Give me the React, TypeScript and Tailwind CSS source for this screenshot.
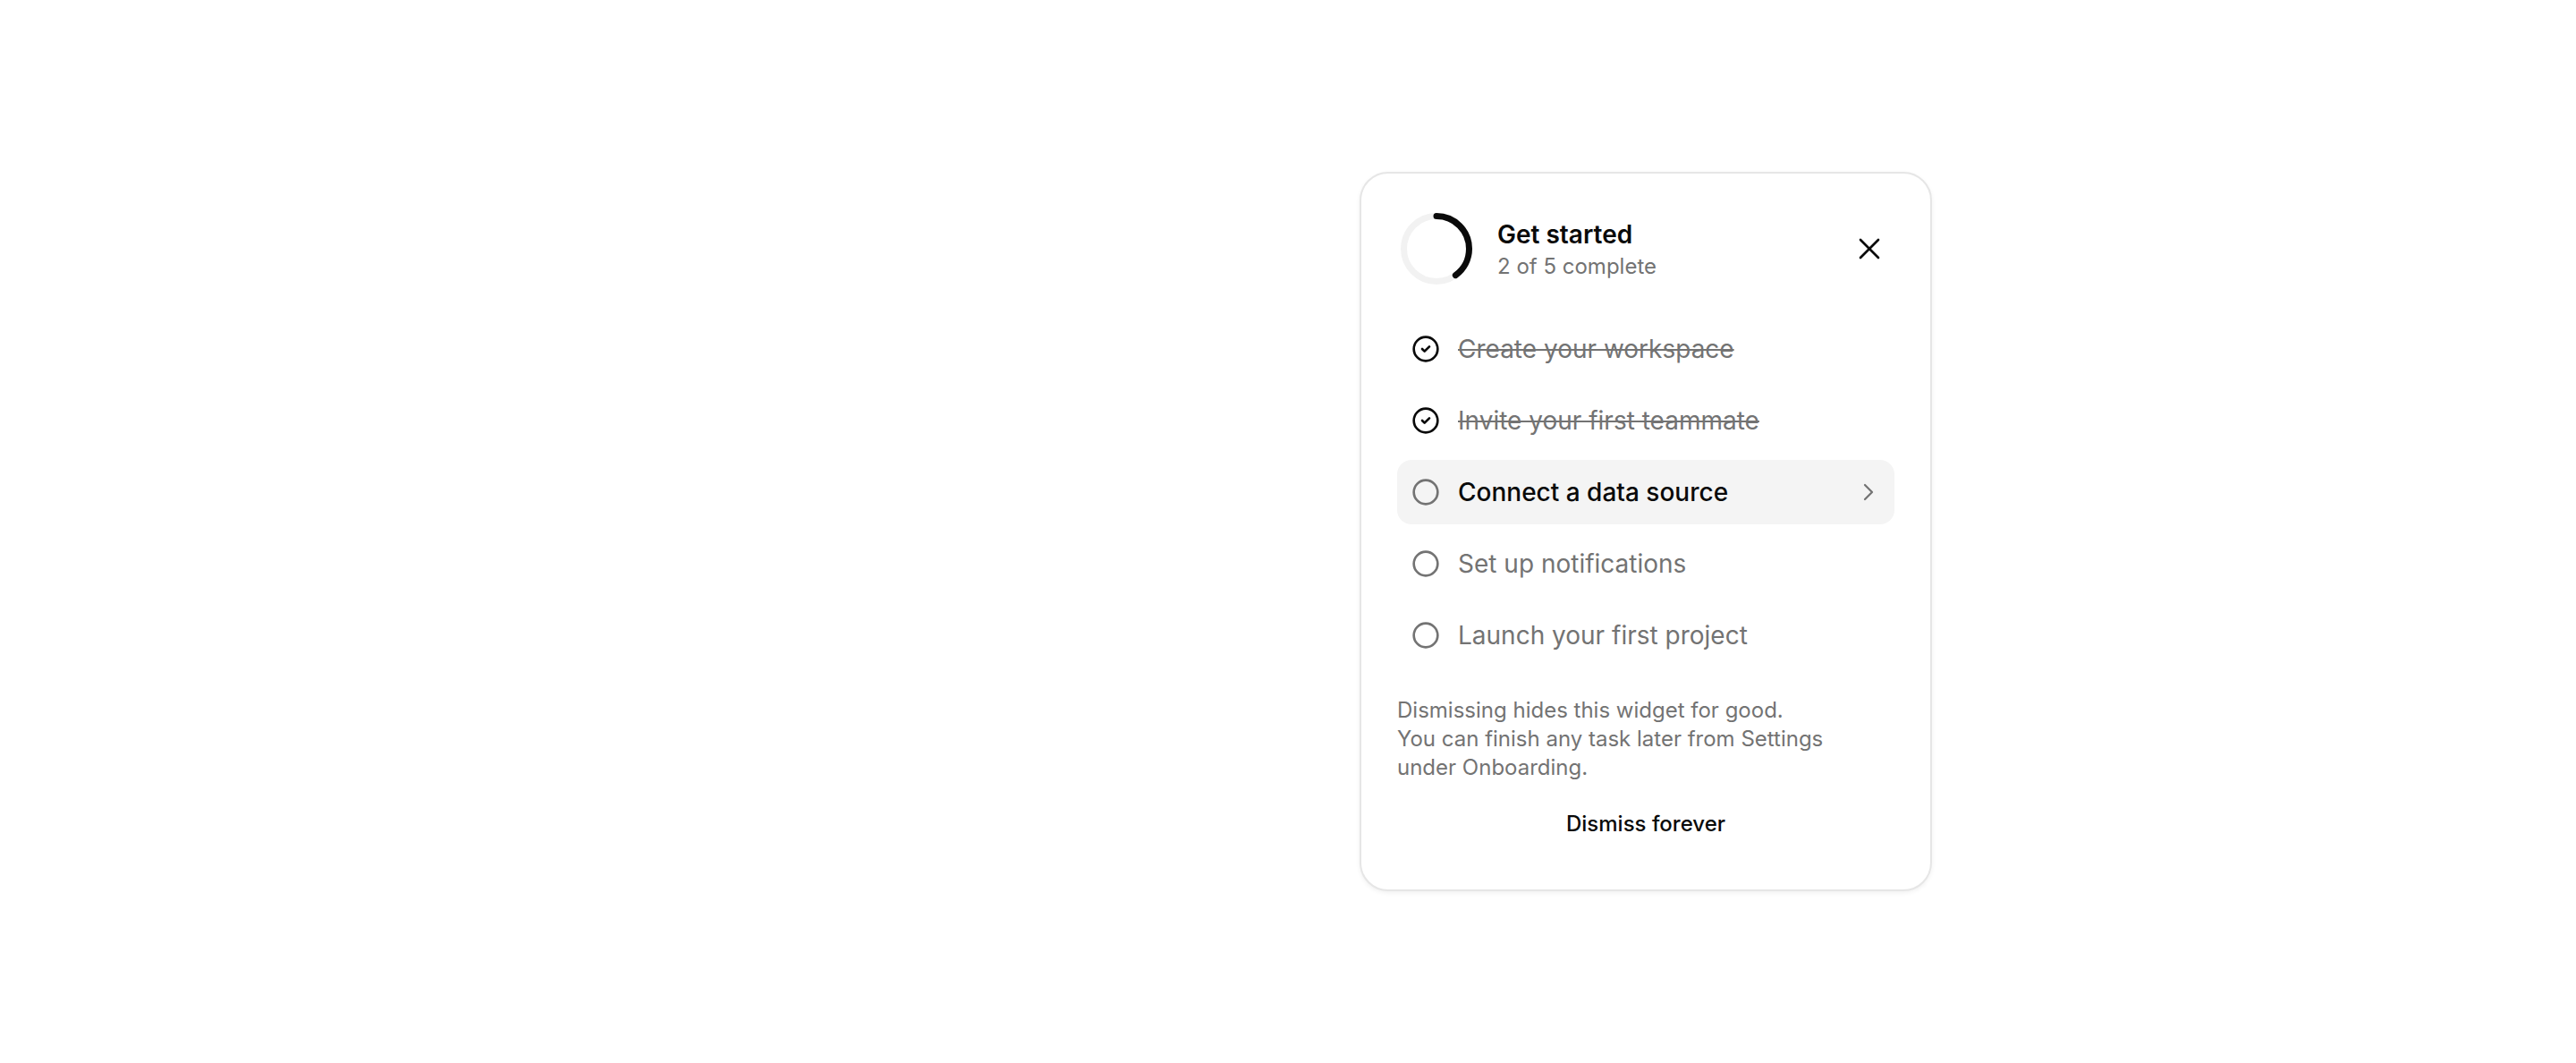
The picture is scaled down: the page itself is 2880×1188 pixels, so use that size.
import React from "react";
import { X, CircleCheck, Circle, ChevronRight } from "lucide-react";

type Task = { label: string; done: boolean; current?: boolean };

const tasks: Task[] = [
  { label: "Create your workspace", done: true },
  { label: "Invite your first teammate", done: true },
  { label: "Connect a data source", done: false, current: true },
  { label: "Set up notifications", done: false },
  { label: "Launch your first project", done: false },
];

function ProgressRing() {
  return (
    <svg width="88" height="88" viewBox="0 0 88 88" className="-rotate-90 shrink-0">
      <circle cx="44" cy="44" r="36.5" fill="none" stroke="#f2f2f2" strokeWidth="7" />
      <circle
        cx="44"
        cy="44"
        r="36.5"
        fill="none"
        stroke="#0a0a0a"
        strokeWidth="7"
        strokeLinecap="round"
        strokeDasharray="91.7 229.3"
      />
    </svg>
  );
}

export default function App() {
  return (
    <div
      className="min-h-screen w-full bg-white flex items-center"
      style={{ fontFamily: "Inter, 'Noto Sans', sans-serif" }}
    >
      <div className="w-full max-w-[1536px] mx-auto px-12 flex justify-end">
        <div className="w-[640px] rounded-[32px] border-2 border-[#e6e6e6] bg-white p-10 shadow-[0_2px_5px_rgba(0,0,0,0.06)]">
          <div className="flex items-center gap-6">
            <ProgressRing />
            <div className="flex-1 min-w-0 pt-1">
              <div className="text-[28px] leading-[36px] font-semibold text-neutral-950">Get started</div>
              <div className="text-[24px] leading-[36px] text-[#737373]">2 of 5 complete</div>
            </div>
            <button className="size-14 flex items-center justify-center rounded-xl text-neutral-950">
              <X size={40} strokeWidth={1.6} />
            </button>
          </div>

          <ul className="mt-8 flex flex-col gap-2">
            {tasks.map((t) => (
              <li
                key={t.label}
                className={`h-[72px] flex items-center gap-5 pl-4 pr-[13px] rounded-2xl ${t.current ? "bg-[#f4f4f4]" : ""}`}
              >
                {t.done ? (
                  <CircleCheck size={32} strokeWidth={2} className="text-neutral-950 shrink-0" />
                ) : (
                  <Circle size={32} strokeWidth={2} className="text-[#737373] shrink-0" />
                )}
                <span
                  className={`flex-1 text-[28px] ${
                    t.done
                      ? "line-through text-[#737373]"
                      : t.current
                      ? "font-medium text-neutral-950"
                      : "text-[#737373]"
                  }`}
                >
                  {t.label}
                </span>
                {t.current && <ChevronRight size={32} strokeWidth={1.7} className="text-[#737373] shrink-0" />}
              </li>
            ))}
          </ul>

          <p className="mt-8 text-[24px] leading-8 text-[#737373]">
            Dismissing hides this widget for good.
            <br />
            You can finish any task later from Settings
            <br />
            under Onboarding.
          </p>

          <button className="mt-[14px] h-[66px] w-full flex items-center justify-center text-[24px] font-medium text-neutral-950">
            Dismiss forever
          </button>
        </div>
      </div>
    </div>
  );
}
